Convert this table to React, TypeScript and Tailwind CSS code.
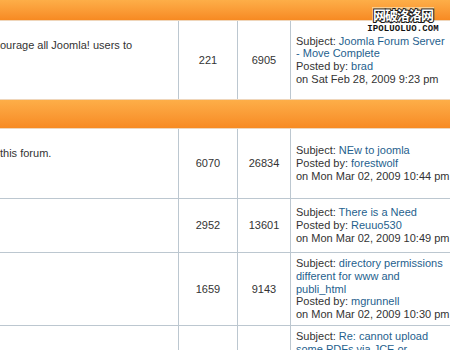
import React from "react";

const font = { fontFamily: '"Liberation Sans", Arial, Helvetica, sans-serif' };

function Bar({ h, top }: { h: string; top?: boolean }) {
  return (
    <div
      className={`${h} w-full bg-gradient-to-b from-[#fdae48] to-[#f78a22] ${
        top ? "border-t border-[#ebc9a3]" : ""
      } border-b border-[#efd6bb]`}
    />
  );
}

type Row = {
  h: string;
  left?: string;
  topics: string;
  posts: string;
  subject: string;
  by?: string;
  on?: string;
  last?: boolean;
};

const rows: Row[] = [
  {
    h: "h-[78px]",
    left: "ourage all Joomla! users to",
    topics: "221",
    posts: "6905",
    subject: "Joomla Forum Server - Move Complete",
    by: "brad",
    on: "on Sat Feb 28, 2009 9:23 pm",
    last: true,
  },
];

const rows2: Row[] = [
  {
    h: "h-[70px]",
    left: "this forum.",
    topics: "6070",
    posts: "26834",
    subject: "NEw to joomla",
    by: "forestwolf",
    on: "on Mon Mar 02, 2009 10:44 pm",
  },
  {
    h: "h-[54px]",
    topics: "2952",
    posts: "13601",
    subject: "There is a Need",
    by: "Reuuo530",
    on: "on Mon Mar 02, 2009 10:49 pm",
  },
  {
    h: "h-[73px]",
    topics: "1659",
    posts: "9143",
    subject: "directory permissions different for www and publi_html",
    by: "mgrunnell",
    on: "on Mon Mar 02, 2009 10:30 pm",
  },
  {
    h: "h-[60px]",
    topics: "",
    posts: "",
    subject: "Re: cannot upload some PDFs via JCE or",
    last: true,
  },
];

function ForumRow({ r }: { r: Row }) {
  return (
    <div
      className={`grid grid-cols-[179px_59px_53px_1fr] ${r.h} ${
        r.last ? "" : "border-b border-[#bcc7d0]"
      }`}
    >
      <div className="border-r border-[#bcc7d0] pt-[18px] text-[11px] leading-[13px] text-[#333] whitespace-nowrap overflow-hidden">
        {r.left}
      </div>
      <div className="border-r border-[#bcc7d0] flex items-center justify-center text-[11px] text-[#333]">
        {r.topics}
      </div>
      <div className="border-r border-[#bcc7d0] flex items-center justify-center text-[11px] text-[#333]">
        {r.posts}
      </div>
      <div
        className={`flex ${r.by ? "items-center" : "items-start pt-[4px]"} pl-[5px] pr-[4px] text-[11px] leading-[12.7px] text-[#333]`}
      >
        <div>
          <div>
            Subject: <span className="text-[#1f5f8e]">{r.subject}</span>
          </div>
          {r.by && (
            <div>
              Posted by: <span className="text-[#1f5f8e]">{r.by}</span>
            </div>
          )}
          {r.on && <div className="whitespace-nowrap">{r.on}</div>}
        </div>
      </div>
    </div>
  );
}

export default function App() {
  return (
    <div className="relative w-[450px] h-[350px] overflow-hidden bg-white" style={font}>
      <Bar h="h-[21px]" />
      {rows.map((r, i) => (
        <ForumRow key={i} r={r} />
      ))}
      <Bar h="h-[30px]" top />
      {rows2.map((r, i) => (
        <ForumRow key={i} r={r} />
      ))}
      <div className="absolute left-[367px] top-[7px] w-[72px] flex flex-col items-center">
        <div
          className="text-[13px] leading-[15px] font-bold text-white bg-[#f8e2b8]/70 px-[1px] [-webkit-text-stroke:2px_#1a1a1a] [paint-order:stroke_fill] tracking-[-1px]"
          style={{ fontFamily: '"Noto Sans CJK SC", sans-serif' }}
        >
          网破洛洛网
        </div>
        <div
          className="mt-[3px] text-[9px] leading-[8px] font-bold text-[#111] bg-white tracking-[0.1px]"
          style={{ fontFamily: '"Liberation Mono", monospace' }}
        >
          IPOLUOLUO.COM
        </div>
      </div>
    </div>
  );
}
